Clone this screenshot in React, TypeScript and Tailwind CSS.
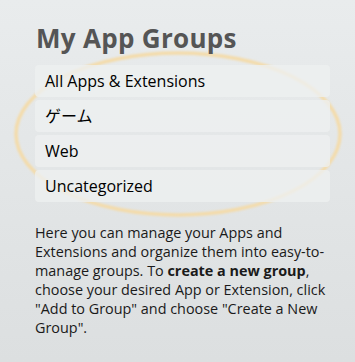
import React from "react";

const GROUPS = ["All Apps & Extensions", "ゲーム", "Web", "Uncategorized"];

export default function App() {
  return (
    <div
      className="relative w-[355px] h-[362px] overflow-hidden bg-gradient-to-b from-[#e9eced] to-[#dcdfe0] text-[#1a1a1a]"
      style={{ fontFamily: '"Open Sans", "Noto Sans CJK JP", sans-serif' }}
    >
      {/* highlight ring */}
      <svg className="absolute left-0 top-0" width="355" height="362">
        <defs>
          <filter id="soft" x="-10%" y="-10%" width="120%" height="120%">
            <feGaussianBlur stdDeviation="1" />
          </filter>
        </defs>
        <ellipse
          cx="178"
          cy="134"
          rx="162"
          ry="81"
          fill="none"
          stroke="#f4dba9"
          strokeWidth="3.5"
          filter="url(#soft)"
        />
      </svg>

      <div className="relative pl-[35px] pr-[25px] pt-[22px]">
        <h1 className="text-[26px] leading-[32px] font-bold text-[#555] tracking-[0.3px] pl-px">
          My App Groups
        </h1>

        <ul className="mt-[11px] flex flex-col gap-[3px]">
          {GROUPS.map((name) => (
            <li
              key={name}
              className="h-[32px] flex items-center px-[10px] rounded-[4px] bg-[#eef0f0]/80 text-[16px] text-black"
            >
              {name}
            </li>
          ))}
        </ul>

        <p className="mt-[21px] -mr-[4px] text-[14.4px] leading-[19px] text-[#1a1a1a]">
          Here you can manage your Apps and Extensions and organize them into easy-to-manage
          groups. To <b>create a new group</b>, choose your desired App or Extension, click
          "Add to Group" and choose "Create a New Group".
        </p>
      </div>
    </div>
  );
}
